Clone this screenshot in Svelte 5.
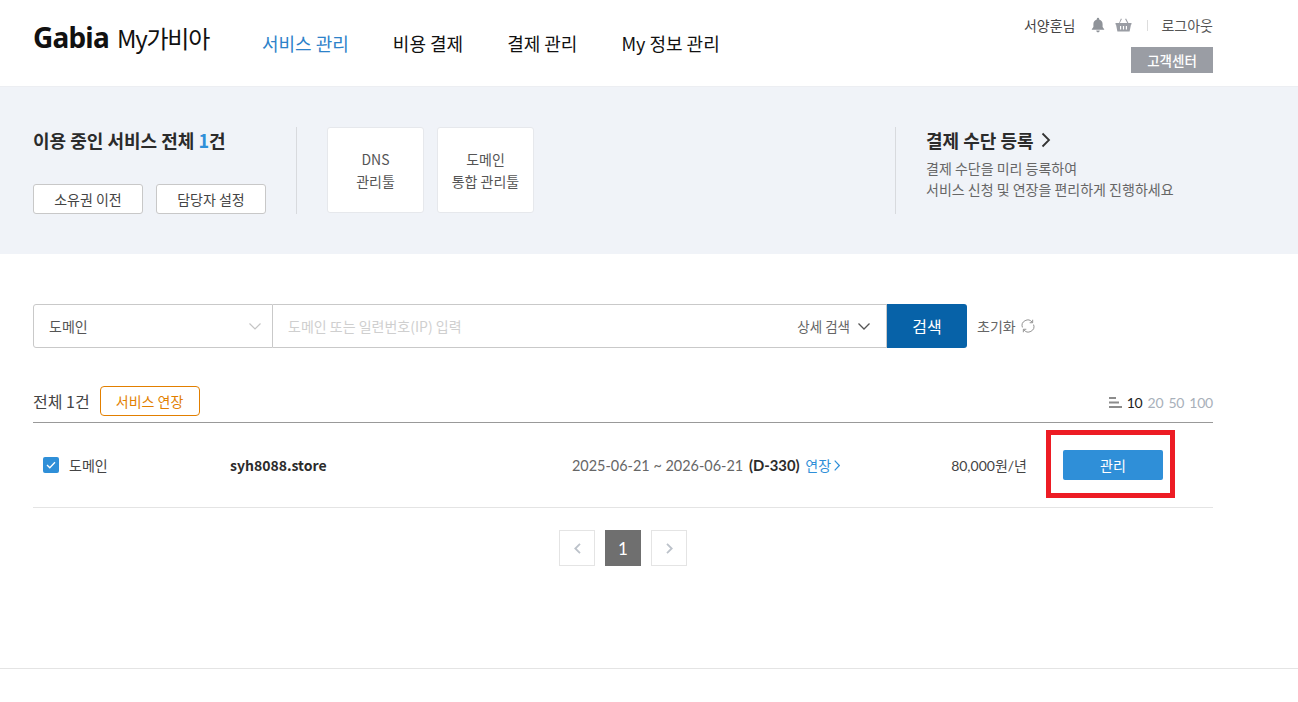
<script>
    const navItems = ["서비스 관리", "비용 결제", "결제 관리", "My 정보 관리"];
    const pageSizes = [10, 20, 50, 100];
</script>

<div class="page">
    <header class="header">
        <div class="brand">
            <span class="brand-name">Gabia</span>
            <span class="brand-sub">My가비아</span>
        </div>
        <nav class="nav">
            {#each navItems as item, i}
                <span class="nav-item" class:active={i === 0}>{item}</span>
            {/each}
        </nav>
        <div class="util">
            <div class="util-top">
                <span class="user">서양훈님</span>
                <svg class="bell" width="16" height="16" viewBox="0 0 16 16">
                    <path fill="#8f9399" d="M8 0.8a1.2 1.2 0 0 1 1.2 1.2v.4C11.4 3 12.6 4.8 12.6 7v3l1.6 2.2v.6H1.8v-.6L3.4 10V7c0-2.2 1.2-4 3.4-4.600V2A1.200 1.200 0 0 1 8 .8zM6.200 13.600h3.600a1.800 1.800 0 0 1-3.600 0z"/>
                </svg>
                <svg class="basket" width="17" height="14" viewBox="0 0 17 14">
                    <path fill="#9a9da4" d="M5.900 .6l1 .5L4.800 5h7.400l-2.100-3.900 1-.5L13.400 5H16.500v1.500H16L14.600 13.400H2.400L1 6.500H.5V5h3.600zM5 8v3.500h1.200V8zm2.900 0v3.500h1.200V8zm2.900 0v3.500H12V8z"/>
                </svg>
                <span class="sep"></span>
                <span class="logout">로그아웃</span>
            </div>
            <span class="support">고객센터</span>
        </div>
    </header>

    <section class="band">
        <div class="band-left">
            <h2 class="band-title">이용 중인 서비스 전체 <em>1</em>건</h2>
            <div class="band-btns">
                <button class="ghost">소유권 이전</button>
                <button class="ghost">담당자 설정</button>
            </div>
        </div>
        <div class="tools">
            <div class="tool">DNS<br />관리툴</div>
            <div class="tool">도메인<br />통합 관리툴</div>
        </div>
        <div class="pay">
            <div class="pay-title">
                결제 수단 등록
                <svg width="10" height="16" viewBox="0 0 10 16">
                    <path d="M1.500 1.500L8 8l-6.500 6.500" fill="none" stroke="#333" stroke-width="1.800"/>
                </svg>
            </div>
            <p class="pay-desc">결제 수단을 미리 등록하여<br />서비스 신청 및 연장을 편리하게 진행하세요</p>
        </div>
    </section>

    <main class="content">
        <div class="search">
            <div class="search-select">
                <span>도메인</span>
                <svg width="12" height="7" viewBox="0 0 12 7">
                    <path d="M.5 .5L6 6l5.500-5.500" fill="none" stroke="#c4c4c4" stroke-width="1.200"/>
                </svg>
            </div>
            <div class="search-input">
                <span class="placeholder">도메인 또는 일련번호(IP) 입력</span>
                <span class="detail">
                    상세 검색
                    <svg width="12" height="7" viewBox="0 0 12 7">
                        <path d="M.5 .5L6 6l5.500-5.500" fill="none" stroke="#555" stroke-width="1.300"/>
                    </svg>
                </span>
            </div>
            <button class="search-btn">검색</button>
            <span class="reset">
                초기화
                <svg width="14" height="14" viewBox="0 0 15 15" fill="none" stroke="#8a8a8a" stroke-width="1">
                    <path d="M1.500 9A6 6 0 0 1 12 3.500"/>
                    <path d="M13.500 6A6 6 0 0 1 3 11.500"/>
                    <path d="M12.500 .8v3.200H9.300"/>
                    <path d="M2.500 14.200V11h3.200"/>
                </svg>
            </span>
        </div>

        <div class="list-bar">
            <span class="total">전체 1건</span>
            <button class="renew">서비스 연장</button>
            <div class="sizes">
                <svg width="13" height="11" viewBox="0 0 13 11">
                    <path fill="#8c8c8c" d="M0 0h7v2H0zM0 4.500h10v2H0zM0 9h13v2H0z"/>
                </svg>
                {#each pageSizes as size, i}
                    <span class="size" class:current={i === 0}>{size}</span>
                {/each}
            </div>
        </div>

        <div class="row">
            <label class="kind">
                <span class="check">
                    <svg width="10" height="8" viewBox="0 0 10 8">
                        <path d="M1 4l2.800 2.800L9 1.200" fill="none" stroke="#fff" stroke-width="1.300"/>
                    </svg>
                </span>
                도메인
            </label>
            <span class="domain">syh8088.store</span>
            <span class="period">
                2025-06-21 ~ 2026-06-21 <b>(D-330)</b>
                <span class="extend">연장
                    <svg width="6" height="11" viewBox="0 0 6 11">
                        <path d="M.7 .7L5.300 5.500 .7 10.300" fill="none" stroke="#2f8fd8" stroke-width="1.200"/>
                    </svg>
                </span>
            </span>
            <span class="price">80,000원/년</span>
            <span class="manage-wrap">
                <button class="manage">관리</button>
            </span>
        </div>

        <div class="pager">
            <span class="page-btn">
                <svg width="7" height="11" viewBox="0 0 7 11">
                    <path d="M6 .8L1.300 5.500 6 10.200" fill="none" stroke="#bcc2ca" stroke-width="1.800"/>
                </svg>
            </span>
            <span class="page-num">1</span>
            <span class="page-btn">
                <svg width="7" height="11" viewBox="0 0 7 11">
                    <path d="M1 .8l4.700 4.700L1 10.200" fill="none" stroke="#bcc2ca" stroke-width="1.800"/>
                </svg>
            </span>
        </div>
    </main>

    <footer class="footer"></footer>
</div>

<style>
    :global(body) {
        background: #fff;
    }

    .page {
        font-family: "Noto Sans CJK KR", "Noto Sans", sans-serif;
        color: #333;
        font-size: 14px;
    }

    button {
        font-family: inherit;
        cursor: pointer;
    }

    .header {
        height: 86px;
        box-sizing: border-box;
        padding: 0 85px 0 33px;
        display: flex;
        align-items: flex-start;
    }

    .brand {
        display: flex;
        align-items: baseline;
        margin-top: 18px;
        width: 229px;
        flex-shrink: 0;
        color: #111;
    }

    .brand-name {
        font-family: "Noto Sans", sans-serif;
        font-size: 28px;
        font-weight: 700;
        letter-spacing: -0.8px;
    }

    .brand-sub {
        font-size: 24px;
        margin-left: 8px;
        letter-spacing: -1.200px;
    }

    .nav {
        display: flex;
        gap: 44px;
        margin-top: 29px;
    }

    .nav-item {
        font-size: 18px;
        line-height: 28px;
        color: #111;
    }

    .active {
        color: #2d82c9;
    }

    .util {
        margin-left: auto;
        display: flex;
        flex-direction: column;
        align-items: flex-end;
        padding-top: 15px;
    }

    .util-top {
        display: flex;
        align-items: center;
        height: 20px;
        font-size: 14px;
        color: #444;
    }

    .bell {
        margin-left: 15px;
    }

    .basket {
        margin-left: 9px;
    }

    .sep {
        width: 1px;
        height: 11px;
        background: #ddd;
        margin: 0 13px 0 15px;
    }

    .logout {
        color: #555;
    }

    .support {
        margin-top: 12px;
        width: 82px;
        height: 26px;
        background: #9a9da4;
        color: #fff;
        font-size: 13.500px;
        font-weight: 500;
        line-height: 26px;
        text-align: center;
    }

    .band {
        height: 168px;
        box-sizing: border-box;
        background: #f0f3f8;
        border-top: 1px solid #eceef2;
        padding: 40px 0 0 33px;
        display: flex;
        align-items: flex-start;
    }

    .band-left {
        width: 263px;
        height: 87px;
        border-right: 1px solid #d8dade;
        display: flex;
        flex-direction: column;
        justify-content: space-between;
    }

    .band-title {
        margin: 0;
        font-size: 18px;
        font-weight: 700;
        line-height: 26px;
        color: #2b2b2b;
    }

    .band-title em {
        font-style: normal;
        color: #2f8fd8;
    }

    .band-btns {
        display: flex;
        gap: 13px;
    }

    .ghost {
        width: 110px;
        height: 30px;
        padding: 0;
        background: #fff;
        border: 1px solid #c8c8c8;
        border-radius: 3px;
        font-size: 14px;
        color: #444;
    }

    .tools {
        display: flex;
        gap: 13px;
        margin-left: 30px;
    }

    .tool {
        width: 97px;
        height: 86px;
        box-sizing: border-box;
        text-align: center;
        background: #fff;
        border: 1px solid #e6e8ec;
        border-radius: 3px;
        font-size: 14px;
        line-height: 22px;
        color: #555;
        padding-top: 20px;
    }

    .pay {
        margin-left: 361px;
        height: 87px;
        box-sizing: border-box;
        border-left: 1px solid #d8dade;
        padding-left: 30px;
    }

    .pay-title {
        display: flex;
        align-items: center;
        gap: 7px;
        font-size: 18px;
        font-weight: 700;
        line-height: 26px;
        color: #2b2b2b;
    }

    .pay-desc {
        margin: 5px 0 0;
        font-size: 14px;
        line-height: 21px;
        color: #666;
    }

    .content {
        width: 1180px;
        margin-left: 33px;
        padding-top: 50px;
    }

    .search {
        display: flex;
        align-items: stretch;
        height: 44px;
    }

    .search-select {
        width: 240px;
        box-sizing: border-box;
        border: 1px solid #c9c9c9;
        border-radius: 3px 0 0 3px;
        display: flex;
        align-items: center;
        justify-content: space-between;
        padding: 0 11px 0 15px;
        color: #555;
    }

    .search-input {
        width: 614px;
        box-sizing: border-box;
        border: 1px solid #c9c9c9;
        border-left: 0;
        display: flex;
        align-items: center;
        justify-content: space-between;
        padding: 0 16px 0 15px;
    }

    .placeholder {
        color: #cfcfcf;
    }

    .detail {
        display: flex;
        align-items: center;
        gap: 8px;
        color: #666;
        font-size: 13.500px;
    }

    .search-btn {
        width: 80px;
        padding: 0;
        background: #0762a8;
        color: #fff;
        border: 0;
        border-radius: 0 3px 3px 0;
        font-size: 16px;
    }

    .reset {
        margin-left: 10px;
        display: flex;
        align-items: center;
        gap: 5px;
        color: #666;
    }

    .list-bar {
        display: flex;
        align-items: center;
        margin-top: 38px;
        height: 30px;
        padding-bottom: 6px;
        border-bottom: 1px solid #999;
    }

    .total {
        font-size: 16px;
        color: #444;
    }

    .renew {
        margin-left: 10px;
        width: 100px;
        height: 30px;
        padding: 0;
        background: #fff;
        border: 1px solid #e27f00;
        border-radius: 4px;
        color: #e27f00;
        font-size: 14px;
    }

    .sizes {
        margin-left: auto;
        display: flex;
        align-items: center;
        gap: 5px;
        font-family: "Lato", sans-serif;
        font-size: 14px;
        letter-spacing: -0.2px;
        color: #a8b0ba;
        padding-top: 2px;
    }

    .current {
        color: #222;
    }

    .row {
        height: 85px;
        box-sizing: border-box;
        border-bottom: 1px solid #e4e4e4;
        display: flex;
        align-items: center;
    }

    .kind {
        width: 197px;
        display: flex;
        align-items: center;
        gap: 10px;
        padding-left: 10px;
        box-sizing: border-box;
        color: #444;
    }

    .check {
        width: 16px;
        height: 16px;
        background: #2f8fd8;
        border-radius: 2px;
        display: flex;
        align-items: center;
        justify-content: center;
    }

    .domain {
        width: 342px;
        font-size: 14px;
        font-weight: 700;
        color: #2b2b2b;
    }

    .period {
        width: 360px;
        font-family: "Lato", "Noto Sans CJK KR", sans-serif;
        font-size: 14.450px;
        color: #666;
    }

    .period b {
        margin-left: 2px;
        font-size: 14.800px;
        color: #2b2b2b;
    }

    .extend {
        margin-left: 2px;
        color: #2f8fd8;
        font-family: "Noto Sans CJK KR", sans-serif;
        font-size: 14px;
    }

    .price {
        width: 88px;
        text-align: right;
        font-family: "Lato", "Noto Sans CJK KR", sans-serif;
        font-size: 14px;
        color: #444;
        margin-left: 7px;
    }

    .manage-wrap {
        margin-left: 36px;
        position: relative;
    }

    .manage {
        display: block;
        width: 100px;
        height: 30px;
        padding: 0;
        background: #2f8fd8;
        color: #fff;
        border: 0;
        border-radius: 2px;
        font-size: 14px;
    }

    /* red annotation round the button */
    .manage-wrap::after {
        content: "";
        position: absolute;
        left: -17px;
        right: -12px;
        top: -20px;
        bottom: -18px;
        border: 5px solid #ed1c24;
        pointer-events: none;
    }

    .pager {
        display: flex;
        justify-content: center;
        gap: 10px;
        margin-top: 22px;
    }

    .page-btn,
    .page-num {
        width: 36px;
        height: 36px;
        box-sizing: border-box;
        display: flex;
        align-items: center;
        justify-content: center;
    }

    .page-btn {
        border: 1px solid #e4e4e4;
    }

    .page-num {
        background: #6f6f6f;
        color: #fff;
        font-family: "Lato", sans-serif;
        font-size: 17px;
    }

    .footer {
        margin-top: 102px;
        border-top: 1px solid #e4e4e4;
        height: 33px;
    }
</style>
